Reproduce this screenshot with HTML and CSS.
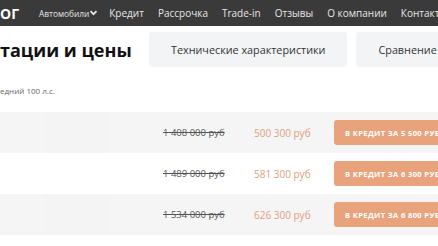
FILE: index.html
```html
<!DOCTYPE html>
<html lang="ru">
<head>
<meta charset="utf-8">
<link rel="stylesheet" href="styles.css">
</head>
<body>
<header class="topbar">
  <div class="logo">ОГ</div>
  <nav class="nav">
    <span class="nav-item nav-small">Автомобили<svg class="chev" width="9" height="6" viewBox="0 0 9 6"><path d="M1.5 1.2 L4.5 4.2 L7.5 1.2" fill="none" stroke="#e6e6e6" stroke-width="1.8"/></svg></span>
    <span class="nav-item">Кредит</span>
    <span class="nav-item">Рассрочка</span>
    <span class="nav-item">Trade-in</span>
    <span class="nav-item">Отзывы</span>
    <span class="nav-item">О компании</span>
    <span class="nav-item">Контакты</span>
  </nav>
</header>
<section class="title-row">
  <h1 class="title">тации и цены</h1>
  <div class="tabs">
    <div class="tab">Технические характеристики</div>
    <div class="tab">Сравнение</div>
  </div>
</section>
<p class="sub">едний 100 л.с.</p>
<div class="table">
  <div class="row alt">
    <div class="cells"><span class="c1"></span><span class="c2"></span><span class="c3"></span></div>
    <span class="old">1 408 000 руб</span>
    <span class="new">500 300 руб</span>
    <span class="btn">В КРЕДИТ ЗА 5 500 РУБ</span>
  </div>
  <div class="row">
    <div class="cells"><span class="c1"></span><span class="c2"></span><span class="c3"></span></div>
    <span class="old">1 489 000 руб</span>
    <span class="new">581 300 руб</span>
    <span class="btn">В КРЕДИТ ЗА 6 300 РУБ</span>
  </div>
  <div class="row alt">
    <div class="cells"><span class="c1"></span><span class="c2"></span><span class="c3"></span></div>
    <span class="old">1 534 000 руб</span>
    <span class="new">626 300 руб</span>
    <span class="btn">В КРЕДИТ ЗА 6 800 РУБ</span>
  </div>
</div>
</body>
</html>
```
FILE: styles.css
```css
* { box-sizing: border-box; }
html, body { margin: 0; padding: 0; }
body {
  width: 438px;
  height: 246px;
  overflow: hidden;
  background: #ffffff;
  font-family: "Open Sans", "Noto Sans", sans-serif;
  color: #222;
}
.topbar {
  height: 26px;
  background: #3a3a3a;
  display: flex;
  align-items: center;
  white-space: nowrap;
}
.logo {
  color: #ffffff;
  font-weight: 700;
  font-size: 14px;
  width: 39px;
  flex: none;
}
.nav {
  display: flex;
  align-items: center;
  gap: 14px;
}
.nav-item {
  color: #e6e6e6;
  font-size: 10px;
  display: flex;
  align-items: center;
  flex: none;
}
.nav-small { font-size: 8.3px; margin-right: -3px; }
.chev { margin-left: 0; }
.title-row {
  display: flex;
  align-items: center;
  margin-top: 6px;
  white-space: nowrap;
}
.title {
  margin: 0;
  width: 149px;
  flex: none;
  font-size: 18px;
  font-weight: 700;
  color: #111;
}
.tabs {
  display: flex;
  gap: 9px;
}
.tab {
  flex: none;
  height: 35px;
  padding: 0 22px;
  background: #f3f4f6;
  border-radius: 3px;
  display: flex;
  align-items: center;
  font-size: 10.8px;
  color: #333;
}
.sub {
  margin: 19px 0 0;
  font-size: 8px;
  color: #666;
  line-height: 10px;
  white-space: nowrap;
}
.table { margin-top: 16px; }
.row {
  height: 41px;
  display: flex;
  align-items: center;
  white-space: nowrap;
}
.row.alt { background: #f5f5f5; }
.cells {
  width: 163px;
  flex: none;
  display: flex;
  align-self: stretch;
}
.cells span { display: block; }
.c1 { width: 45px; }
.c2 { width: 65px; }
.c3 { width: 40px; }
.row.alt .c2 { background: #f4f4f4; }
.old {
  width: 91px;
  flex: none;
  font-size: 9.5px;
  color: #555;
  text-decoration: line-through;
}
.new {
  width: 80px;
  flex: none;
  font-size: 10px;
  color: #e0a07d;
}
.btn {
  flex: none;
  width: 140px;
  height: 25px;
  background: #e8a37c;
  border-radius: 3px;
  color: #ffffff;
  font-size: 7.6px;
  font-weight: 700;
  letter-spacing: 0.35px;
  display: flex;
  align-items: center;
  padding-left: 11px;
}
```
